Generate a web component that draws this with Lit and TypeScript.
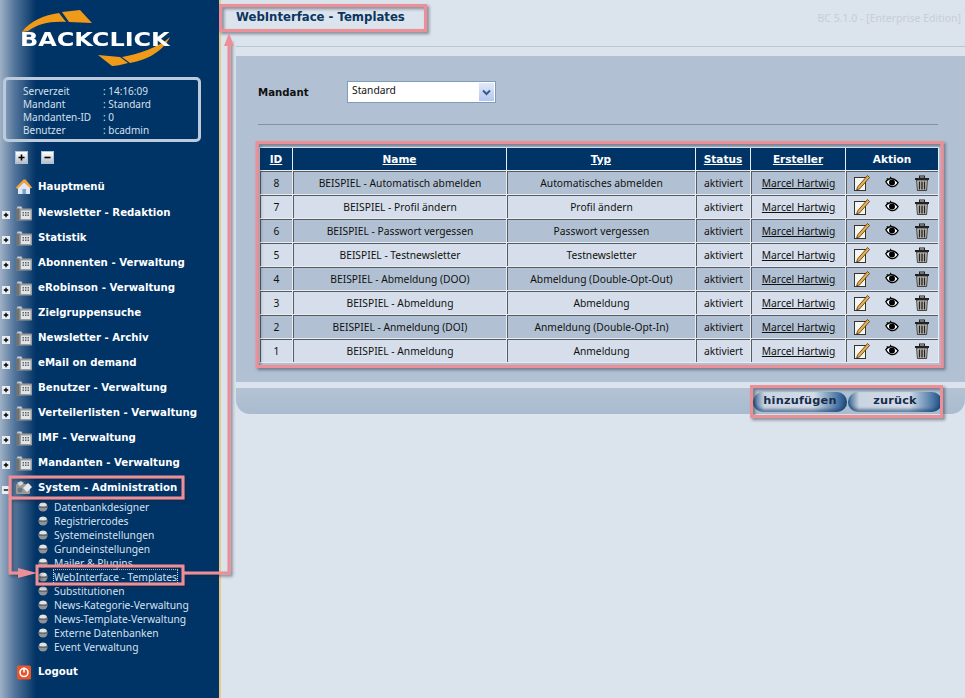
import { LitElement, html, css, svg } from "lit";
import { customElement } from "lit/decorators.js";

const folder = html`<svg class="ic" viewBox="0 0 18 18"><path d="M1.500 5l1-2.500h4l1 2.500z" fill="#c9ced4"/><rect x="1" y="4.500" width="16" height="12" rx="1" fill="#9a9c9c"/><rect x="1" y="4.500" width="3.500" height="12" fill="#6f7275"/><rect x="6" y="6.500" width="9.500" height="8.500" fill="#e2e5e8"/><g fill="#62666b"><rect x="7.500" y="8" width="1.500" height="1.500"/><rect x="10" y="8" width="1.500" height="1.500"/><rect x="12.500" y="8" width="1.500" height="1.500"/><rect x="7.500" y="10.500" width="1.500" height="1.500"/><rect x="10" y="10.500" width="1.500" height="1.500"/><rect x="12.500" y="10.500" width="1.500" height="1.500"/></g></svg>`;
const home = html`<svg class="ic" viewBox="0 0 18 18"><path d="M3 9v7h12V9L9 4z" fill="#dfe7f2"/><rect x="7.500" y="11" width="3.400" height="5" fill="#7da0c8"/><path d="M0.800 9.500L8.500 1.500h2l6.700 8-1.600 1L9 4.500 2.500 11z" fill="#f0a23c"/></svg>`;
const sys = html`<svg class="ic" viewBox="0 0 18 18"><rect x="1" y="5" width="14" height="10" rx="1" fill="#9a9c9c"/><path d="M2 4l4-2 3 2-4 3z" fill="#d7dade"/><path d="M8 9l5-5 4 4-5 5z" fill="#e6e9ec"/><circle cx="5" cy="11" r="2.600" fill="#73777c"/></svg>`;
const logoutIc = html`<svg class="ic" viewBox="0 0 18 18"><rect x="2" y="2.500" width="14" height="14" rx="1.500" fill="#e8552a"/><circle cx="9" cy="9.500" r="4" fill="none" stroke="#fff" stroke-width="1.600"/><rect x="8.200" y="4.500" width="1.600" height="5" fill="#fff"/></svg>`;
const bullet = html`<svg class="bul" viewBox="0 0 10 10"><circle cx="5" cy="5" r="4.600" fill="#8f9296"/><ellipse cx="5" cy="2.800" rx="3.600" ry="2" fill="#e2e3e5"/><rect x="0.500" y="4.600" width="9" height="1" fill="#4d5056"/></svg>`;
const plus = html`<span class="exp"><svg viewBox="0 0 9 9"><path d="M2 4.500h5M4.500 2v5" stroke="#000" stroke-width="1.500"/></svg></span>`;
const minus = html`<span class="exp"><svg viewBox="0 0 9 9"><path d="M2 4.500h5" stroke="#000" stroke-width="1.500"/></svg></span>`;
const edit = html`<svg class="act" viewBox="0 0 16 16"><rect x="0.500" y="2.500" width="11" height="13" fill="#f7f7f2" stroke="#333"/><path d="M3.500 12l-.8 3 3-1.200L15.500 2.500 13.500.5z" fill="#eab04a" stroke="#4b300c" stroke-width=".8"/></svg>`;
const eye = html`<svg class="act eye" viewBox="0 0 16 16"><path d="M1 6.500C4 2 10 1.500 15 7.500c-.8 1.500-1.500 2.500-3 3.500C8 13.500 3.500 11.500 1 6.500z" fill="#fff" stroke="#000" stroke-width="1.500"/><circle cx="8" cy="7.500" r="3.400" fill="#000"/><path d="M2 2.800l3 1.700M6 1l1.500 2.500" stroke="#000" stroke-width="1.200"/></svg>`;
const trash = html`<svg class="act" viewBox="0 0 16 16"><path d="M1 3h14v2H1z" fill="#222"/><rect x="5.500" y="1" width="5" height="2" fill="none" stroke="#222"/><path d="M2.600 5h10.800l-.8 10.500H3.400z" fill="#c4c2ba" stroke="#222" stroke-width=".8"/><path d="M5.500 6.500v8M8 6.500v8M10.500 6.500v8" stroke="#222" stroke-width="1.400"/></svg>`;

const nav = ["Newsletter - Redaktion","Statistik","Abonnenten - Verwaltung","eRobinson - Verwaltung","Zielgruppensuche","Newsletter - Archiv","eMail on demand","Benutzer - Verwaltung","Verteilerlisten - Verwaltung","IMF - Verwaltung","Mandanten - Verwaltung"];
const subs = ["Datenbankdesigner","Registriercodes","Systemeinstellungen","Grundeinstellungen","Mailer & Plugins","WebInterface - Templates","Substitutionen","News-Kategorie-Verwaltung","News-Template-Verwaltung","Externe Datenbanken","Event Verwaltung"];
const rows: [string,string,string][] = [
["8","BEISPIEL - Automatisch abmelden","Automatisches abmelden"],
["7","BEISPIEL - Profil ändern","Profil ändern"],
["6","BEISPIEL - Passwort vergessen","Passwort vergessen"],
["5","BEISPIEL - Testnewsletter","Testnewsletter"],
["4","BEISPIEL - Abmeldung (DOO)","Abmeldung (Double-Opt-Out)"],
["3","BEISPIEL - Abmeldung","Abmeldung"],
["2","BEISPIEL - Anmeldung (DOI)","Anmeldung (Double-Opt-In)"],
["1","BEISPIEL - Anmeldung","Anmeldung"]];
const info = [["Serverzeit","14:16:09"],["Mandant","Standard"],["Mandanten-ID","0"],["Benutzer","bcadmin"]];

@customElement("app-root")
export class AppRoot extends LitElement {
  static styles = css`
    :host { display:block; width:965px; height:698px; position:relative; overflow:hidden; font-family:"Noto Sans","DejaVu Sans",sans-serif; font-size:10.250px; background:#dbe3ec; }
    .page { display:flex; height:698px; }
    .side { flex:none; box-sizing:border-box; border-right:2px solid #e9c98a; width:221px; color:#fff;
      background:linear-gradient(90deg,#9fb1c5 0,#56779d 14px,#003366 36px); display:flex; flex-direction:column; }
    .logo { position:relative; height:77px; flex:none; }
    .logo svg { position:absolute; left:0; top:0; }
    .logo span { position:absolute; left:20px; top:27px; font:bold 19px/24px "DejaVu Sans",sans-serif; color:#fff; transform:scaleX(1.26); transform-origin:left; }
    .info { margin-left:3px; width:198px; height:65px; box-sizing:border-box; border:3px solid #bccbdb; border-radius:5px; padding:5px 0 0 17px; display:grid; grid-template-columns:80px 1fr; grid-auto-rows:13px; line-height:13px; color:#d6e0ec; font-size:10px; flex:none; }
    .tools { display:flex; gap:13px; margin:9px 0 0 15px; height:13px; flex:none; }
    .tool { width:11px; height:11px; border:1px solid #a9c2df; background:linear-gradient(#fff,#b9bec4); display:block; }
    .tool svg { display:block; width:11px; height:11px; }
    .tree { margin-top:16px; display:flex; flex-direction:column; }
    .it { height:25px; display:flex; align-items:center; position:relative; padding-left:15px; font:bold 10.200px/14px "DejaVu Sans",sans-serif; color:#fff; white-space:nowrap; }
    .it.first { height:26px; margin-top:-6px; }
    .ic { width:18px; height:18px; margin-right:5px; flex:none; }
    .exp { position:absolute; left:2px; top:50%; margin-top:-2px; width:8px; height:8px; background:#e8edf3; }
    .exp svg { display:block; width:8px; height:8px; }
    .subs { display:flex; flex-direction:column; }
    .sub { height:14px; display:flex; align-items:center; padding-left:38px; line-height:14px; color:#d8e2ee; white-space:nowrap; }
    .bul { width:10px; height:10px; margin-right:6px; flex:none; }
    .sel { outline:1px dotted #cfe0f0; }
    .logout { margin-top:5px; }
    .main { flex:1; min-width:0; display:flex; flex-direction:column; padding-left:15px; }
    .top { height:47px; flex:none; display:flex; justify-content:space-between; box-sizing:border-box; border-bottom:1px solid #b9c5d2; }
    .title { font:bold 11.700px/16px "DejaVu Sans",sans-serif; color:#0b3560; margin-top:9px; }
    .ver { font-size:10.500px; color:#c6ced8; margin:12px 4px 0 0; line-height:13px; }
    .panel { margin-top:9px; height:326px; flex:none; background:#b1c1d3; padding:25px 27px 0 22px; box-sizing:border-box; }
    .form { display:flex; height:22px; align-items:center; }
    .form label { width:89px; font:bold 10.200px/14px "DejaVu Sans",sans-serif; color:#111; position:relative; top:1px; }
    .select { width:149px; height:22px; box-sizing:border-box; background:#fff; border:1px solid #7f9db9; display:flex; justify-content:space-between; padding:1px; }
    .select span { padding-left:3px; line-height:15px; color:#111; }
    .select i { width:15px; background:linear-gradient(#e2e9f8,#b4c7ee); display:flex; align-items:center; justify-content:center; }
    .select svg { width:9px; height:7px; }
    hr { border:0; border-top:1px solid #7f93a8; margin:21px 0 22px; }
    table { width:680px; margin-left:1px; table-layout:fixed; border-collapse:separate; border-spacing:1px; background:#e7ecf2; color:#111; }
    col.a{width:32px} col.b{width:213px} col.c{width:188px} col.d{width:54px} col.e{width:94px}
    th { height:22px; padding:0; background:#003366; color:#fff; font:bold 10.500px/14px "DejaVu Sans",sans-serif; text-align:center; }
    td { height:22px; padding:0; text-align:center; border-left:1px solid #555d63; border-top:1px solid #555d63; background:#b1c1d3; white-space:nowrap; }
    tr.alt td { background:#d5deea; }
    .acts { display:grid; grid-template-columns:repeat(3,30px); justify-items:center; align-items:center; }
    .act { width:16px; height:16px; display:block; }
    .act.eye { width:14px; height:14px; }
    .bar { margin-top:6px; height:26px; flex:none; background:linear-gradient(#b4c3d4,#a9bbcf); border-radius:0 0 14px 14px; display:flex; justify-content:flex-end; padding:4px 23px 0 0; box-sizing:border-box; }
    .btn { width:94px; height:20px; margin-left:1px; border-radius:10px; text-align:center; font:bold 11.300px/18px "DejaVu Sans",sans-serif; color:#182c4c; letter-spacing:.2px;
      background:linear-gradient(90deg,#3a6593 0,#c9d4e1 12%,#d3dce7 65%,#4c78a6 90%,#1b4a7c 100%); box-shadow:inset 0 -3px 3px rgba(20,60,110,.55); }
    .ann { position:absolute; left:0; top:0; width:965px; height:698px; pointer-events:none; }
  `;

  render() {
    return html`<div class="page">
      <aside class="side">
        <div class="logo">
          <svg width="220" height="77" viewBox="0 0 220 77">
            <path d="M22 32C30 21 44 15 59 13l7 9C50 21 38 24 28 31z" fill="#f09a1a"/>
            <path d="M62 12l18-2 12 13-23-1z" fill="#f09a1a"/>
            <path d="M98 55l22 2 8 6c-7 2-12 3-16 3z" fill="#f09a1a"/>
            <path d="M122 57c16-3 36-9 48-20-6 13-22 23-40 26z" fill="#f09a1a"/>
          </svg>
          <span>BACKCLICK</span>
        </div>
        <div class="info">${info.map(([k,v])=>html`<div>${k}</div><div>:&nbsp;${v}</div>`)}</div>
        <div class="tools"><span class="tool"><svg viewBox="0 0 9 9"><path d="M2 4.500h5M4.500 2v5" stroke="#000" stroke-width="1.300"/></svg></span><span class="tool"><svg viewBox="0 0 9 9"><path d="M2 4.500h5" stroke="#000" stroke-width="1.300"/></svg></span></div>
        <nav class="tree">
          <div class="it first">${home}Hauptmenü</div>
          ${nav.map(n=>html`<div class="it">${plus}${folder}${n}</div>`)}
          <div class="it">${minus}${sys}System - Administration</div>
          <div class="subs">${subs.map(s=>html`<div class="sub">${bullet}<span class=${s.startsWith("WebInterface")?"sel":""}>${s}</span></div>`)}</div>
          <div class="it logout">${logoutIc}Logout</div>
        </nav>
      </aside>
      <main class="main">
        <div class="top"><div class="title">WebInterface - Templates</div><div class="ver">BC 5.1.0 - [Enterprise Edition]</div></div>
        <section class="panel">
          <div class="form"><label>Mandant</label><div class="select"><span>Standard</span><i><svg viewBox="0 0 9 7"><path d="M1 1.500l3.500 3.500L8 1.500" fill="none" stroke="#3b5a8c" stroke-width="2"/></svg></i></div></div>
          <hr>
          <table>
            <colgroup><col class="a"><col class="b"><col class="c"><col class="d"><col class="e"><col></colgroup>
            <thead><tr><th><u>ID</u></th><th><u>Name</u></th><th><u>Typ</u></th><th><u>Status</u></th><th><u>Ersteller</u></th><th>Aktion</th></tr></thead>
            <tbody>${rows.map((r,i)=>html`<tr class=${i%2?"alt":""}><td>${r[0]}</td><td>${r[1]}</td><td>${r[2]}</td><td>aktiviert</td><td><u>Marcel Hartwig</u></td><td><div class="acts">${edit}${eye}${trash}</div></td></tr>`)}</tbody>
          </table>
        </section>
        <div class="bar"><div class="btn">hinzufügen</div><div class="btn">zurück</div></div>
      </main>
    </div>
    <svg class="ann" viewBox="0 0 965 698">
      <defs><filter id="s" x="-5%" y="-5%" width="110%" height="110%"><feDropShadow dx="2" dy="2" stdDeviation="1.500" flood-color="#223" flood-opacity=".5"/></filter></defs>
      ${svg`<g fill="none" stroke="#ec8f97" stroke-width="3" filter="url(#s)">
        <rect x="220.500" y="5.500" width="205" height="25"/>
        <rect x="257" y="142.500" width="685" height="224"/>
        <rect x="751.500" y="386.500" width="190" height="30"/>
        <rect x="10" y="477" width="173" height="21"/>
        <rect x="37" y="566" width="146" height="18"/>
        <path d="M10 498V573H28"/>
        <path d="M183 573H229V40"/>
      </g>
      <path d="M18 568L37 573L18 578z" fill="#ec8f97"/>
      <path d="M224 46L229 33L234 46z" fill="#ec8f97"/>`}
    </svg>`;
  }
}
